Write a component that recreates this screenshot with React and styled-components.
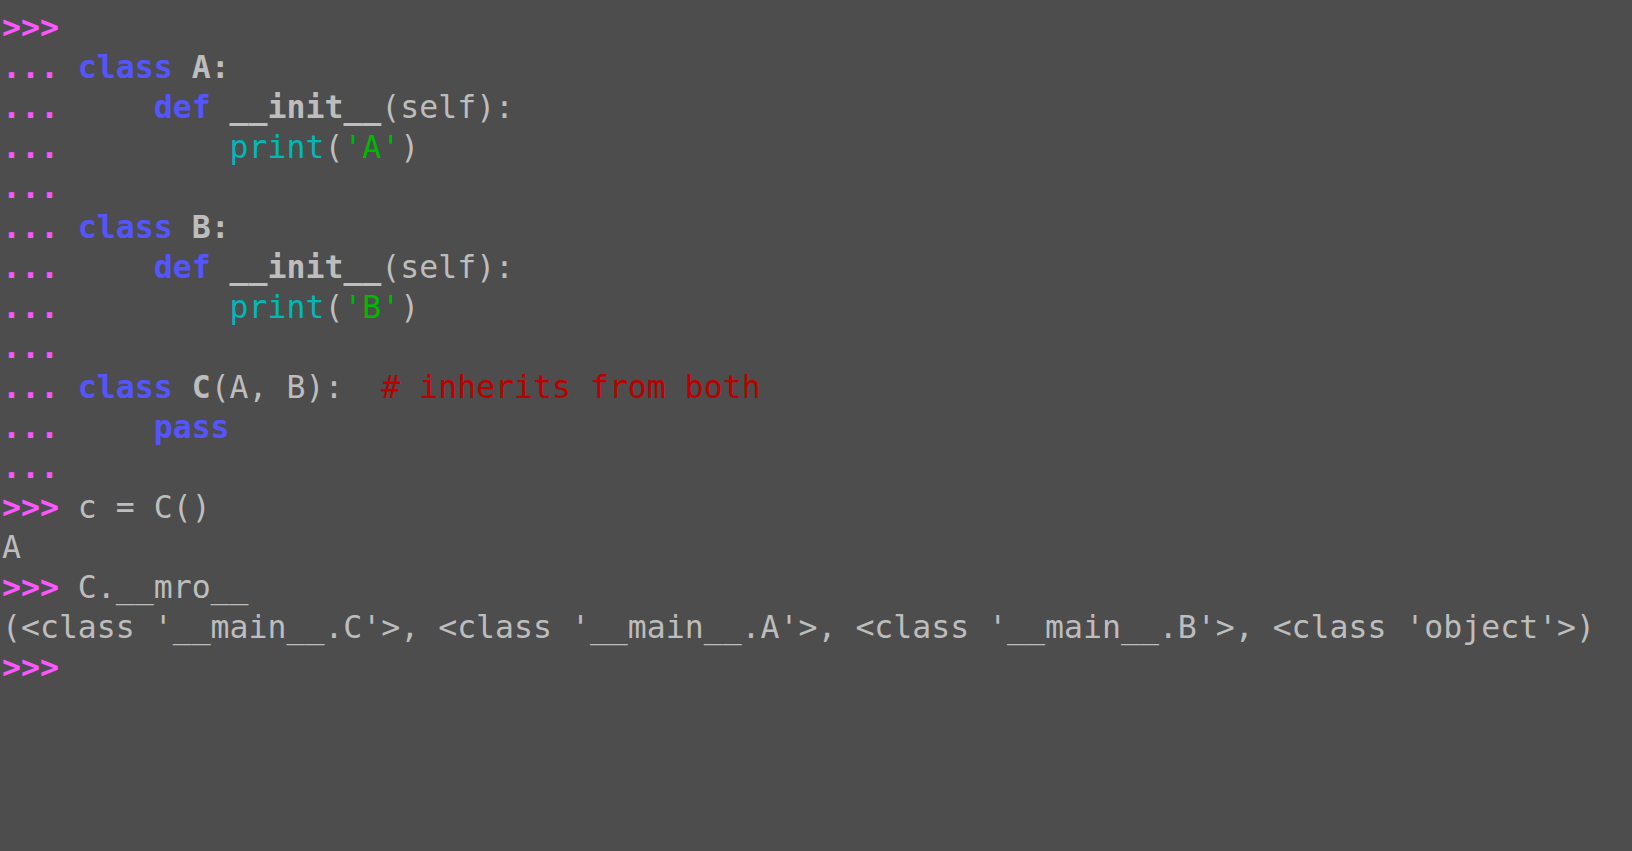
import React from "react";
import styled, { createGlobalStyle, css } from "styled-components";

const Global = createGlobalStyle`
  html, body {
    margin: 0;
    padding: 0;
    background: #4d4d4d;
  }
  body {
    min-height: 100vh;
  }
`;

const Terminal = styled.pre`
  margin: 0;
  padding: 7px 0 0 2px;
  min-height: 851px;
  box-sizing: border-box;
  background: #4d4d4d;
  color: #bdbdbd;
  font-family: "DejaVu Sans Mono", monospace;
  font-size: 31.5px;
  line-height: 40px;
  white-space: pre;
`;

const Line = styled.div`
  height: 40px;
`;

const tones = {
  prompt: "#ff55ff",
  keyword: "#5555ff",
  text: "#bdbdbd",
  builtin: "#00b8b8",
  string: "#00b800",
  comment: "#bb0000",
};

const Tok = styled.span`
  color: ${(p) => tones[p.$tone || "text"]};
  ${(p) =>
    p.$bold &&
    css`
      font-weight: bold;
    `}
`;

const P = ({ children }) => (
  <Tok $tone="prompt" $bold>
    {children}
  </Tok>
);

const lines = [
  [<P key="p">{">>>"}</P>],
  [
    <P key="p">{"... "}</P>,
    <Tok key="k" $tone="keyword" $bold>class</Tok>,
    " ",
    <Tok key="n" $bold>A</Tok>,
    <Tok key="c" $bold>:</Tok>,
  ],
  [
    <P key="p">{"...     "}</P>,
    <Tok key="k" $tone="keyword" $bold>def</Tok>,
    " ",
    <Tok key="n" $bold>__init__</Tok>,
    "(self):",
  ],
  [
    <P key="p">{"...         "}</P>,
    <Tok key="b" $tone="builtin">print</Tok>,
    "(",
    <Tok key="s" $tone="string">'A'</Tok>,
    ")",
  ],
  [<P key="p">...</P>],
  [
    <P key="p">{"... "}</P>,
    <Tok key="k" $tone="keyword" $bold>class</Tok>,
    " ",
    <Tok key="n" $bold>B</Tok>,
    <Tok key="c" $bold>:</Tok>,
  ],
  [
    <P key="p">{"...     "}</P>,
    <Tok key="k" $tone="keyword" $bold>def</Tok>,
    " ",
    <Tok key="n" $bold>__init__</Tok>,
    "(self):",
  ],
  [
    <P key="p">{"...         "}</P>,
    <Tok key="b" $tone="builtin">print</Tok>,
    "(",
    <Tok key="s" $tone="string">'B'</Tok>,
    ")",
  ],
  [<P key="p">...</P>],
  [
    <P key="p">{"... "}</P>,
    <Tok key="k" $tone="keyword" $bold>class</Tok>,
    " ",
    <Tok key="n" $bold>C</Tok>,
    "(A, B):  ",
    <Tok key="c" $tone="comment"># inherits from both</Tok>,
  ],
  [
    <P key="p">{"...     "}</P>,
    <Tok key="k" $tone="keyword" $bold>pass</Tok>,
  ],
  [<P key="p">...</P>],
  [<P key="p">{">>> "}</P>, "c = C()"],
  ["A"],
  [<P key="p">{">>> "}</P>, "C.__mro__"],
  [
    "(<class '__main__.C'>, <class '__main__.A'>, <class '__main__.B'>, <class 'object'>)",
  ],
  [<P key="p">{">>>"}</P>],
];

export default function App() {
  return (
    <>
      <Global />
      <Terminal>
        {lines.map((parts, i) => (
          <Line key={i}>{parts}</Line>
        ))}
      </Terminal>
    </>
  );
}
